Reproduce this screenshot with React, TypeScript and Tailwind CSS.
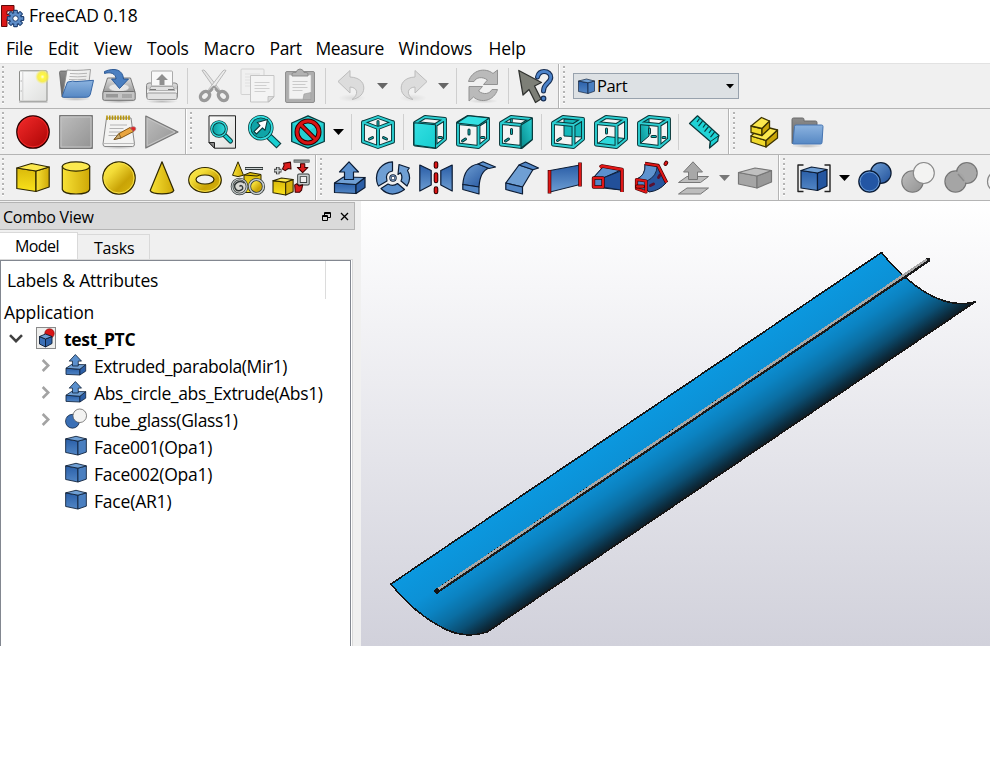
import React from "react";

const Icon = ({ children, size = 34 }: { children: React.ReactNode; size?: number }) => (
  <svg width={size} height={size} viewBox="0 0 34 34" fill="none" strokeLinejoin="round" className="shrink-0 overflow-visible">
    {children}
  </svg>
);

const Cell = ({ children }: { children: React.ReactNode }) => (
  <div className="flex w-[43px] shrink-0 items-center justify-center">{children}</div>
);

const Sep = ({ w = "w-[9px]" }: { w?: string }) => (
  <div className={`${w} flex shrink-0 items-center justify-center`}>
    <div className="h-[36px] w-px bg-[#cfcfcf]" />
  </div>
);

const Arrow = ({ color = "#000", w = "w-[18px]" }: { color?: string; w?: string }) => (
  <div className={`${w} flex shrink-0 items-center justify-center`}>
    <svg width="11" height="6" viewBox="0 0 11 6"><path d="M0 0h11L5.5 6z" fill={color} /></svg>
  </div>
);

const Grip = ({ w = "w-[11px]" }: { w?: string }) => (
  <div className={`${w} flex shrink-0 items-center pl-[1px]`}>
    <svg width="5" height="40" viewBox="0 0 5 40">
      {[0, 1, 2, 3, 4, 5, 6, 7].map((i) => (
        <g key={i}>
          <rect x="1" y={i * 5 + 1} width="2" height="2" fill="#fff" />
          <rect x="1" y={i * 5} width="2" height="2" fill="#b4b4b4" />
        </g>
      ))}
    </svg>
  </div>
);

const Break = () => <div className="mr-px w-[2px] shrink-0 self-stretch border-l border-[#b4b4b4] bg-white" />;

/* ---------- shared gradients ---------- */
const Defs = () => (
  <svg width="0" height="0" className="absolute">
    <defs>
      <linearGradient id="yel" x1="0" y1="0" x2="1" y2="1"><stop offset="0" stopColor="#fce94f" /><stop offset=".3" stopColor="#f3dc38" /><stop offset=".65" stopColor="#c9a306" /><stop offset="1" stopColor="#dcb90f" /></linearGradient>
      <linearGradient id="yelv" x1="0" y1="0" x2="0" y2="1"><stop offset="0" stopColor="#d9b90c" /><stop offset="1" stopColor="#fae21a" /></linearGradient>
      <linearGradient id="yelh" x1="0" y1="0" x2="1" y2="0"><stop offset="0" stopColor="#f7e136" /><stop offset="1" stopColor="#cfa906" /></linearGradient>
      <linearGradient id="blu" x1="0" y1="0" x2="1" y2="1"><stop offset="0" stopColor="#6f9fd4" /><stop offset="1" stopColor="#20509a" /></linearGradient>
      <linearGradient id="bluv" x1="0" y1="0" x2="0" y2="1"><stop offset="0" stopColor="#2a5fa8" /><stop offset="1" stopColor="#5286c5" /></linearGradient>
      <linearGradient id="mir" x1="0" y1="0" x2="0" y2="1"><stop offset="0" stopColor="#2a5da6" /><stop offset="1" stopColor="#6c9dd3" /></linearGradient>
      <linearGradient id="red" x1="0" y1="0" x2="1" y2="1"><stop offset="0" stopColor="#f52b2b" /><stop offset="1" stopColor="#a90303" /></linearGradient>
      <linearGradient id="gry" x1="0" y1="0" x2="1" y2="1"><stop offset="0" stopColor="#bdbdbd" /><stop offset="1" stopColor="#939393" /></linearGradient>
      <linearGradient id="grv" x1="0" y1="0" x2="0" y2="1"><stop offset="0" stopColor="#dedede" /><stop offset="1" stopColor="#9a9a9a" /></linearGradient>
      <linearGradient id="pap" x1="0" y1="0" x2="1" y2="1"><stop offset="0" stopColor="#fbfbfb" /><stop offset="1" stopColor="#dfe0de" /></linearGradient>
      <linearGradient id="fold" x1="0" y1="0" x2="0" y2="1"><stop offset="0" stopColor="#8cb3df" /><stop offset="1" stopColor="#5688c4" /></linearGradient>
      <linearGradient id="fgry" x1="0" y1="0" x2="0" y2="1"><stop offset="0" stopColor="#8c8c8c" /><stop offset="1" stopColor="#5e5e5e" /></linearGradient>
      <linearGradient id="cyd" x1="0" y1="0" x2="1" y2="0"><stop offset="0" stopColor="#06989a" /><stop offset="1" stopColor="#34e0e2" /></linearGradient>
      <linearGradient id="cyr" x1="0" y1="1" x2="1" y2="0"><stop offset="0" stopColor="#06898b" /><stop offset="1" stopColor="#2bd3d6" /></linearGradient>
      <linearGradient id="cyl" x1="0" y1="0" x2="1" y2="1"><stop offset="0" stopColor="#34e0e2" /><stop offset="1" stopColor="#16cdd0" /></linearGradient>
      <radialGradient id="sun"><stop offset="0" stopColor="#fffde0" /><stop offset="0.3" stopColor="#fff740" /><stop offset="0.65" stopColor="#f7ec3b" stopOpacity=".85" /><stop offset="1" stopColor="#f6f07a" stopOpacity="0" /></radialGradient>
      <radialGradient id="shd"><stop offset="0" stopColor="#000" stopOpacity=".22" /><stop offset="1" stopColor="#000" stopOpacity="0" /></radialGradient>
    </defs>
  </svg>
);

/* ---------- row 1 icons ---------- */
const NewDoc = () => (
  <Icon>
    <rect x="3.5" y="1.8" width="27.5" height="30.5" rx="1" fill="url(#pap)" stroke="#8b8c89" strokeWidth="1" />
    <path d="M6.8 2.5v29" stroke="#d0d0d0" /><circle cx="5.2" cy="12" r=".8" fill="#bbb" /><circle cx="5.2" cy="22" r=".8" fill="#bbb" />
    <path d="M3 33h28.5" stroke="#b0b0b0" strokeWidth="1.2" />
    <circle cx="26.5" cy="7.8" r="7.5" fill="url(#sun)" />
  </Icon>
);
const OpenDoc = () => (
  <Icon>
    <ellipse cx="17" cy="30" rx="15" ry="2" fill="url(#shd)" />
    <path d="M.5 3.500q0-1.500 1.500-1.500H9l1.500 2V28H3z" fill="url(#fgry)" stroke="#606060" strokeWidth=".8" />
    <path d="M4 25L8 1q8 1 23.500-.5l-1.500 13z" fill="url(#pap)" stroke="#8a8a8a" strokeWidth=".8" />
    <path d="M11 4.500q8 .8 17-.2M10.500 7.500q8 .8 17-.2M10 10.500q8 .6 17-.2" stroke="#b5b5b5" />
    <path d="M8.500 13q6-1.500 8.500-.4L34.500 11.300 31.300 25.500q-.8 2.800-3.800 2.800H4.500q-2 0-.8-2.500z" fill="url(#fold)" stroke="#3767a6" strokeWidth="1" />
  </Icon>
);
const SaveDoc = () => (
  <Icon>
    <ellipse cx="17" cy="32.500" rx="17" ry="2" fill="url(#shd)" />
    <path d="M5.500 9h23L33 23H1z" fill="url(#grv)" stroke="#777" />
    <ellipse cx="17" cy="18.500" rx="10" ry="4" fill="#e6e6e6" stroke="#c4c4c4" strokeWidth=".7" />
    <rect x=".8" y="22.500" width="32.400" height="8.800" rx="1.500" fill="#c4c4c4" stroke="#6e6e6e" />
    <path d="M4 25h12v3.500H4z" fill="#989898" /><path d="M21 25v4m2-4v4m2-4v4m2-4v4m2-4v4" stroke="#8b8b8b" />
    <path d="M2.500 2.500C13-2 21 1 21.500 10H26.500L17.500 19.500 9.500 10H14C14 5 9 2.500 2.500 4.500z" fill="#4b7fc0" stroke="#23508f" strokeWidth=".9" />
  </Icon>
);
const Print = () => (
  <Icon>
    <ellipse cx="17" cy="32.500" rx="16" ry="2" fill="url(#shd)" />
    <rect x="1.500" y="14" width="31" height="15.500" rx="2.500" fill="url(#grv)" stroke="#858585" />
    <path d="M2 20.500q15-3 30 0v5H2z" fill="#eee" />
    <rect x="6.500" y="2" width="21" height="15" rx="1" fill="#f8f8f8" stroke="#aaa" />
    <path d="M17 5l6 6h-3.500v5h-5v-5H11z" fill="#8f8f8f" />
    <path d="M6 17.500h22l2 4H4z" fill="#e0e0e0" stroke="#999" strokeWidth=".7" />
    <rect x="2" y="24" width="30" height="6.500" rx="1.500" fill="#e2e2e2" stroke="#999" /><path d="M5 20.500h6M23 20.500h6" stroke="#777" />
  </Icon>
);
const Cut = () => (
  <Icon>
    <path d="M5 1.500L20 23l2.500-2.500L8 1.800Q6.200.3 5 1.500z" fill="#e5e5e5" stroke="#aaa" strokeWidth=".8" />
    <path d="M29 1.500L14 23l-2.500-2.500L26 1.800q1.800-1.500 3-.3z" fill="#ededed" stroke="#aaa" strokeWidth=".8" />
    <ellipse cx="8" cy="27" rx="4" ry="5" transform="rotate(48 8 27)" stroke="#999" strokeWidth="3.400" />
    <ellipse cx="26" cy="27" rx="4" ry="5" transform="rotate(-48 26 27)" stroke="#999" strokeWidth="3.400" />
    <path d="M11.500 23.500L17 18l5.500 5.500" stroke="#999" strokeWidth="3" /><circle cx="17" cy="20" r="1" fill="#ddd" />
  </Icon>
);
const Copy = () => (
  <Icon>
    <rect x="1" y="0" width="23" height="25.500" rx="1" fill="#f0f0f0" stroke="#d2d2d2" />
    <path d="M5 5h15M5 8h15M5 11h15M5 14h15M5 17h15" stroke="#e0e0e0" />
    <path d="M10.500 6.500h23.500V28l-5 5h-18.500z" fill="#f4f4f4" stroke="#c5c5c5" />
    <path d="M14.500 13.500h15M14.500 16.500h12M14.500 19.500h15M14.500 22.500h11" stroke="#d0d0d0" strokeWidth="1.200" />
    <path d="M34 27.500h-6v5.500z" fill="#ddd" stroke="#bbb" strokeWidth=".8" />
  </Icon>
);
const Paste = () => (
  <Icon>
    <rect x="2.500" y="2.500" width="29" height="31" rx="1.500" fill="#adadad" stroke="#8f8f8f" />
    <path d="M6 6h22v24H6z" fill="#f2f2f2" stroke="#c0c0c0" strokeWidth=".6" />
    <path d="M9.500 12.500h15M9.500 15.500h13M9.500 18.500h15M9.500 21.500h10" stroke="#cacaca" strokeWidth="1.100" />
    <path d="M28 23.500l-7 1.500-1 5.500h8z" fill="#b5b5b5" stroke="#999" strokeWidth=".6" />
    <path d="M9 7v-2q0-1.500 2-1.500h2q1-3.500 4-3.500t4 3.500h2q2 0 2 1.500v2z" fill="#b2b2b2" stroke="#888" strokeWidth=".9" />
  </Icon>
);
const Undo = ({ flip = false }: { flip?: boolean }) => (
  <Icon>
    <g transform={flip ? "translate(35 0) scale(-1 1)" : "translate(-1 0)"}>
      <ellipse cx="18" cy="29" rx="14" ry="4" fill="url(#shd)" opacity=".35" />
      <path d="M4 12.500L16 1.500V8C27 8.500 31 15 29.500 21.500 28.500 26 24 29.500 18 30.500 24.500 26 24.500 18.500 16 18V24z" fill="#dcdcdc" stroke="#bcbcbc" />
    </g>
  </Icon>
);
const Refresh = () => (
  <Icon>
    <ellipse cx="17" cy="32" rx="15" ry="2.500" fill="url(#shd)" opacity=".6" />
    <path d="M2.500 12.500C6 1 19-2 27 4.500L31.500 1V15.500H17.500L21.500 11C16 7 10 8.500 8 12.500z" fill="#bababa" stroke="#929292" />
    <path d="M31.500 20.500C28 32 15 34.500 7.500 28L3 32V17.500h13.500L12.500 22C18 26.500 24 24.500 26 20.500z" fill="#bababa" stroke="#929292" />
  </Icon>
);
const Whats = () => (
  <Icon>
    <path d="M.8 1.500L23.500 13.500 16.500 17 23 30 17.500 33.500 11 20.500 5 26z" fill="#7d7f77" stroke="#30322f" strokeWidth="1.300" />
    <path d="M19.500 8C20.500 4 23 2.500 26 2.500 30 2.500 32.800 5 32.800 8.500 32.800 14 25.500 14 25.500 22" stroke="#162d52" strokeWidth="5" strokeLinecap="round" />
    <path d="M19.500 8C20.500 4 23 2.500 26 2.500 30 2.500 32.800 5 32.800 8.500 32.800 14 25.500 14 25.500 22" stroke="#4c83ca" strokeWidth="2.800" strokeLinecap="round" />
    <circle cx="25.500" cy="29.500" r="2.300" fill="#4c83ca" stroke="#162d52" strokeWidth="1.200" />
  </Icon>
);

/* ---------- row 2 icons ---------- */
const Rec = () => (
  <Icon><circle cx="17" cy="17" r="16.200" fill="url(#red)" stroke="#280000" strokeWidth="1.300" /><circle cx="17" cy="17" r="14.900" stroke="#ef2929" strokeWidth="1" /></Icon>
);
const Stop = () => (
  <Icon><rect x=".7" y=".7" width="32.600" height="32.600" fill="url(#gry)" stroke="#777" strokeWidth="1.200" /><rect x="2" y="2" width="30" height="30" stroke="#c4c4c4" /></Icon>
);
const Edit = () => (
  <Icon>
    <ellipse cx="17" cy="32" rx="17" ry="2.500" fill="url(#shd)" />
    <path d="M4.500 3h24.500l3.500 26q0 2.500-2 2.500H3Q1 31.500 1 29z" fill="#f3f3f2" stroke="#888" />
    <path d="M1.500 28.500h31" stroke="#bbb" />
    <path d="M8 10h17M7.500 13.500h14M7 17h16M6.500 20.500h9" stroke="#b3b3b3" strokeWidth="1.100" />
    <path d="M5 .5v4.500m2.750-4.500v4.500m2.750-4.500v4.500m2.750-4.500v4.500m2.750-4.500v4.500m2.750-4.500v4.500m2.750-4.500v4.500m2.750-4.500v4.500m2.750-4.500v4.500" stroke="#b8960c" strokeWidth="1.600" />
    <path d="M12 24.500L17 18.500 28 12.500 31.500 16.500 19 23z" fill="#e9a53f" stroke="#7b4b09" strokeWidth=".9" />
    <path d="M12 24.500L17 18.500 19 23z" fill="#c9a86a" stroke="#5b3a0b" strokeWidth=".6" />
    <path d="M28 12.500l3-.8q3.500 0 2.500 3.300l-2 1.500z" fill="#df2626" stroke="#9e8080" strokeWidth=".7" />
  </Icon>
);
const Play = () => (
  <Icon><path d="M.8 1L33 17 .8 33z" fill="url(#gry)" stroke="#777" strokeWidth="1.200" /><path d="M2.200 3.300L30 17 2.200 30.700z" stroke="#c4c4c4" /></Icon>
);
const FitAll = () => (
  <Icon>
    <path d="M4 .8h26.500v32.400H9.500L4 27.500z" fill="url(#pap)" stroke="#222" />
    <path d="M4 27.500h5.500v5.700z" fill="#888" stroke="#222" />
    <path d="M19 19.500L25.500 26" stroke="#0b3b3d" strokeWidth="5" strokeLinecap="round" /><path d="M19.500 20L25.500 26" stroke="#19cfd2" strokeWidth="3" strokeLinecap="round" />
    <circle cx="14" cy="14" r="7.300" fill="url(#cyd)" stroke="#0b3b3d" strokeWidth="3" /><circle cx="14" cy="14" r="7.400" stroke="#34e0e2" strokeWidth="1.300" />
  </Icon>
);
const FitSel = () => (
  <Icon>
    <path d="M20 20.500L31 31" stroke="#0b3b3d" strokeWidth="7.200" /><path d="M20 20.500L30.200 30.200" stroke="#19cfd2" strokeWidth="5" />
    <circle cx="12.800" cy="12.800" r="11.200" fill="#0fa4a7" stroke="#0b3b3d" strokeWidth="3.200" /><circle cx="12.800" cy="12.800" r="11.200" stroke="#34e0e2" strokeWidth="1.700" />
    <path d="M6 16.500L12 10.500 9.300 7.500 19.500 4.500 17 15.300 14.500 12.800 8.500 19z" fill="#fff" stroke="#0b3b3d" strokeWidth="1.100" />
  </Icon>
);
const NoDraw = () => (
  <Icon>
    <path d="M17 .8L33.300 8v18.500L17 33.200.7 26.500V8z" fill="#23cdd0" stroke="#08383a" strokeWidth="1.300" />
    <path d="M17 2.500L31.500 9 17 15.500 2.500 9z" fill="#34e0e2" opacity=".8" />
    <circle cx="17" cy="17" r="11" stroke="#2b0000" strokeWidth="5" /><path d="M9.500 9.500l15 15" stroke="#2b0000" strokeWidth="4.600" />
    <circle cx="17" cy="17" r="11" stroke="#d81414" strokeWidth="3" /><path d="M9.500 9.500l15 15" stroke="#d81414" strokeWidth="2.800" />
  </Icon>
);
const Tube = ({ d }: { d: string }) => (
  <>
    <path d={d} stroke="#08383a" strokeWidth="3.900" strokeLinecap="round" />
    <path d={d} stroke="#2ccfd2" strokeWidth="1.900" strokeLinecap="round" />
  </>
);
const Dash = ({ d }: { d: string }) => (
  <><path d={d} stroke="#08383a" strokeWidth="3" strokeLinecap="round" /><path d={d} stroke="#17b5b8" strokeWidth="1" strokeLinecap="round" /></>
);
const Iso = () => (
  <Icon>
    <path d="M17 2L32 7.500V26.500L17 32 2 26.500V7.500z" fill="#f3f3f3" />
    <Dash d="M17 6.500v4M8.500 24l3-1.400M25.500 24l-3-1.400" />
    <Tube d="M17 2L32 7.300V26.700L17 32 2 26.700V7.300zM2 7.300L17 13 32 7.300M17 13v19" />
  </Icon>
);
const Cube = ({ face }: { face: "front" | "top" | "right" | "rear" | "bottom" | "left" }) => (
  <Icon>
    <path d="M2 8L12 2 32 4v20L22.500 32 2 29.500z" fill="#f4f4f4" />
    {face === "rear" && <path d="M13 4L31 5v17l-18-1z" fill="#16b8bb" stroke="#08383a" />}
    {face === "left" && <path d="M2 8l10-6v19L2 29.500z" fill="url(#cyr)" stroke="#08383a" />}
    {face === "bottom" && <path d="M3 29l10-7.500 18 2L22 31z" fill="#2bd8db" stroke="#08383a" />}
    {face === "top" && <Dash d="M13 15v4M25.500 22.500h2.500M6.500 26l3-2" />}
    {face === "right" && <Dash d="M12.500 14.500v4M6.500 26l3-2M12.300 4v2.500" />}
    {(face === "bottom" || face === "left") && <Dash d="M12.500 14v4" />}
    {face === "left" && <Dash d="M15 21.500h3.500M26 22.500h2" />}
    {face === "rear" && <Dash d="M6.500 25.500l3-2" />}
    {face === "front" && <Dash d="M26 22.500h2.500" />}
    <Tube d="M2 8L12 2 32 4v20L22.500 32 2 29.500zM2 8L22.500 10 32 4M22.500 10v22" />
    {face === "front" && <path d="M1 7.700L22.500 9.700V33L1 30z" fill="url(#cyl)" stroke="#08383a" strokeWidth="1.100" />}
    {face === "top" && <path d="M.8 8L12 .8 33.300 3 22.500 10.500z" fill="#34e0e2" stroke="#08383a" strokeWidth="1.100" />}
    {face === "right" && <path d="M22 10L33.300 3v21.500L22 33.300z" fill="url(#cyr)" stroke="#08383a" strokeWidth="1.100" />}
  </Icon>
);
const Ruler = () => (
  <Icon>
    <path d="M2.500 8.500L10.500.8 32 20.500q-1 2-1.200 5.500L22.500 33l.8-6.500z" fill="#1fd3d6" stroke="#08383a" strokeWidth="1.200" />
    <path d="M22.500 33l1-6.500L32 20.500" stroke="#08383a" />
    <path d="M12.500 3.500L10 7M15.500 6.200l-4 5M18.500 9L16 12.500M21.500 11.700l-4 5M24.500 14.500L22 18M27.500 17.200l-4 5" stroke="#08383a" strokeWidth="1.200" />
  </Icon>
);
const PartWb = () => (
  <Icon>
    <g stroke="#3b3200" strokeWidth="1.300">
      <path d="M4 21L19 25.500v6.500L4 27z" fill="#f0d92c" /><path d="M19 25.500L30.500 15v8L19 32z" fill="#c9a608" />
      <path d="M4 21l11-10 15.500 4L19 25.500z" fill="#fbe84d" />
      <path d="M4 11l11 2.500V20.500L4 17.500z" fill="#f0d92c" /><path d="M15 13.500L22.500 6v7.500L15 20.500z" fill="#c9a608" />
      <path d="M4 11l10.500-8.500 8 3.500-7.500 7.500z" fill="#fbe84d" />
    </g>
  </Icon>
);
const Folder = () => (
  <Icon>
    <ellipse cx="17" cy="31" rx="16" ry="2" fill="url(#shd)" />
    <path d="M2 4.500q0-1.500 1.500-1.500h9q1.500 0 1.500 1.500v1.500h11.500q1.500 0 1.500 1.500v21H2z" fill="url(#fgry)" stroke="#6a6a6a" />
    <path d="M4.500 11.500q0-1.500 1.500-1.500h25.500Q33 10 33 11.500l-1 16q0 1.500-1.500 1.500H3.500Q2 29 3 27z" fill="url(#fold)" stroke="#4675b2" />
  </Icon>
);

/* ---------- row 3 icons ---------- */
const Y = "#2e2700";
const Box = () => (
  <Icon>
    <path d="M.8 7L20 10v20.500L.8 27.500z" fill="url(#yelv)" stroke={Y} strokeWidth="1.200" /><path d="M20 10L33.200 6v20L20 30.500z" fill="url(#yelh)" stroke={Y} strokeWidth="1.200" />
    <path d="M.8 7L15.500 2.500 33.200 6 20 10z" fill="#fce94f" stroke={Y} strokeWidth="1.200" />
  </Icon>
);
const Cyl = () => (
  <Icon><path d="M3.300 5.500v23C5 34.500 29 34.500 30.700 28.500v-23z" fill="url(#yelh)" stroke={Y} strokeWidth="1.200" /><ellipse cx="17" cy="5.500" rx="13.700" ry="4.600" fill="#fce94f" stroke={Y} strokeWidth="1.200" /></Icon>
);
const Sphere = () => (
  <Icon><circle cx="17" cy="17" r="16.200" fill="url(#yel)" stroke={Y} strokeWidth="1.200" /><circle cx="17" cy="17" r="15" stroke="#f6e04a" /></Icon>
);
const Cone = () => (
  <Icon><path d="M17 .8L28.800 29.500C27 34 7 34 5.200 29.500z" fill="url(#yelh)" stroke={Y} strokeWidth="1.200" /></Icon>
);
const Torus = () => (
  <Icon><ellipse cx="17" cy="19" rx="16.300" ry="12.500" fill="url(#yel)" stroke={Y} strokeWidth="1.200" /><ellipse cx="17" cy="19" rx="15" ry="11.300" stroke="#f6e04a" /><ellipse cx="17" cy="18.500" rx="9" ry="4.500" fill="#f0f0f0" stroke={Y} strokeWidth="1.200" /></Icon>
);
const Prims = () => (
  <Icon>
    <path d="M13 14l6-2.500 11 2v12l-4 6H13z" fill="url(#yelv)" stroke={Y} /><path d="M13 14l13 1 4-1.500" stroke={Y} />
    <path d="M7 .8l5.500 13.500q-5.500 2.500-11 0z" fill="url(#yelh)" stroke={Y} />
    <path d="M14 7.500h18" stroke="#333a3a" strokeWidth="3" /><path d="M14.500 7.500h17" stroke="#ccd2d2" />
    <circle cx="8.500" cy="25.500" r="7.500" fill="#d9d9d4" stroke="#333a3a" strokeWidth="2.600" /><circle cx="8.500" cy="25.500" r="7.500" stroke="#c8cece" strokeWidth="1.200" />
    <path d="M8.500 25.500q2-2 3 .5t-2.500 3.500-5-2.500 2-5.500 7.500.5" stroke="#333a3a" strokeWidth="1.500" />
    <circle cx="25.500" cy="25.500" r="7" fill="url(#yel)" stroke="#333a3a" strokeWidth="3.200" /><circle cx="25.500" cy="25.500" r="7" stroke="#c8cece" strokeWidth="1.600" />
  </Icon>
);
const Builder = () => (
  <Icon size={36}>
    <path d="M0 19.500L12 21v12L0 31z" fill="url(#yelv)" stroke={Y} /><path d="M12 21l7-2.500V30l-7 3z" fill="#d5b20c" stroke={Y} /><path d="M0 19.500l8-2.500 11 1.500L12 21z" fill="#fce94f" stroke={Y} />
    <path d="M4.500 6.500v7M1 10h7" stroke="#333" strokeWidth="3.400" /><path d="M4.500 7v6M1.500 10h6" stroke="#ccd2d2" strokeWidth="1.600" />
    <path d="M9 8.500l1.500-3.500-.5-2L16.500 2 17 8.500l-2.500-.5-3 2z" fill="#dc1c1c" stroke="#3c0000" />
    <path d="M19.500 1h15" stroke="#333a3a" strokeWidth="2.800" /><path d="M20 1h14" stroke="#ccd2d2" />
    <path d="M26 3.500h4v3.500h3l-5 5-5-5h3z" fill="#dc1c1c" stroke="#3c0000" />
    <path d="M24.500 14.500h8.500v8h-8.500z" fill="#eee" stroke="#333a3a" strokeWidth="3.300" /><path d="M24.500 14.500h8.500v8h-8.500z" stroke="#ccd2d2" strokeWidth="1.500" />
    <path d="M22.500 22.500l2 2 3.500-1-1 5-2 2-4 0-.5-7z" fill="#dc1c1c" stroke="#3c0000" />
  </Icon>
);
const N = "#0b1b33";
const Extrude = ({ size = 34, gray = false }: { size?: number; gray?: boolean }) => (
  <Icon size={size}>
    {gray ? (
      <g fill="#bdbdbd" stroke="#777" strokeWidth="1">
        <path d="M1.500 21.500l8.500-6h21.500l-8 6z" /><path d="M1.500 33l8.500-6h21.500l-8 6z" /><path d="M11.500 18.500v-7.500H6.500L16 .8 25.500 11h-5v7.500z" fill="#a8a8a8" />
      </g>
    ) : (
      <g stroke={N} strokeWidth="1.200">
        <path d="M1.500 22L23 23.500v9L1.500 31.500z" fill="url(#bluv)" /><path d="M23 23.500l9-7v10l-9 6z" fill="#2b5ea6" />
        <path d="M1.500 22l9-6 21.500.5-9 7z" fill="#6f9fd4" /><path d="M11.500 18.500v-7.500H6.500L16 .8 25.500 11h-5v7.500z" fill="#5b90cd" />
      </g>
    )}
  </Icon>
);
const Revolve = () => (
  <Icon>
    <g stroke={N} strokeWidth="1.200">
      <path d="M16.500.8C6 1.500-1 10 .8 20.500q.5 2.500 1.700 4.500L11 20Q8.500 11.500 16.500 10z" fill="#6f9fd4" />
      <path d="M5 27.500Q15 38 28.500 28.500L21.500 22.500Q17 26 12 23z" fill="#5b90cd" />
      <path d="M31 25Q36 17 31.500 9.500L33.300 7 23 3.500 22 13.500 24.500 11.800Q27 16 25 20z" fill="#6f9fd4" />
    </g>
    <circle cx="17" cy="17" r="2.600" fill="#fff" stroke={N} strokeWidth="2.200" /><circle cx="17" cy="17" r="2.600" stroke="#7f9fc8" strokeWidth=".9" />
  </Icon>
);
const Mirror = () => (
  <Icon>
    <g stroke={N} strokeWidth="1.200"><path d="M.8 4L12.200 9.500v14.500L.8 30z" fill="url(#mir)" /><path d="M33.200 4L21.800 9.500v14.500l11.400 6z" fill="url(#mir)" /></g>
    <path d="M17 2.500v3M17 13.500v6.500M17 27.500v3.500" stroke="#2b0000" strokeWidth="4.600" strokeLinecap="round" />
    <path d="M17 2.500v3M17 13.500v6.500M17 27.500v3.500" stroke="#dc1414" strokeWidth="2.600" strokeLinecap="round" />
  </Icon>
);
const Fillet = () => (
  <Icon>
    <g stroke={N} strokeWidth="1.200">
      <path d="M.8 23.500Q2 5.500 16 3L27 7Q18 10 17 26z" fill="url(#blu)" />
      <path d="M.8 23.500L17 26v7L.8 28.500z" fill="#5286c5" />
      <path d="M16 3l5-2.200L33.500 6 27 7.500z" fill="#5b90cd" />
    </g>
  </Icon>
);
const Chamfer = () => (
  <Icon>
    <g stroke={N} strokeWidth="1.200">
      <path d="M.8 22L14 4l14 4.500L17.500 26z" fill="#6f9fd4" /><path d="M.8 22L17.500 26v7L.8 28.500z" fill="#5286c5" /><path d="M14 4l6.500-3 13 6-5.500 1.800z" fill="#5286c5" />
    </g>
  </Icon>
);
const Ruled = () => (
  <Icon>
    <path d="M2 9.500L32 4V23.500L2 31z" fill="url(#mir)" stroke={N} />
    <path d="M1.500 9v23.500M32 1.500v24" stroke="#3c0000" strokeWidth="3.600" /><path d="M1.500 9.500v22.500M32 2v23" stroke="#e01616" strokeWidth="2.200" />
  </Icon>
);
const Loft = () => (
  <Icon>
    <path d="M3 16L12 6l18 3v20l-18-2z" fill="#3c70b6" stroke={N} /><path d="M3 16L12 6l18 3L12 17z" fill="#5b90cd" stroke={N} /><path d="M12 26V17L30 10v19z" fill="#22509a" stroke={N} strokeWidth=".8" />
    <path d="M9 6.500L11 5l20 3.500V31" stroke="#3c0000" strokeWidth="3.600" /><path d="M9 6.500L11 5l20 3.500V31" stroke="#e01616" strokeWidth="2.300" />
    <path d="M2.500 17h9.500v9H2.500z" fill="#5286c5" stroke="#3c0000" strokeWidth="3.400" /><path d="M2.500 17h9.500v9H2.500z" stroke="#e01616" strokeWidth="2.100" />
  </Icon>
);
const Sweep = () => (
  <Icon>
    <path d="M3 18Q12 14 11 3l13 2 8 17q-7 8-17 9z" fill="#27569f" stroke={N} />
    <path d="M3 18Q12 14 11 3l12 2Q23 15 13 20z" fill="#5f93cf" stroke={N} strokeWidth=".8" />
    <path d="M11 2.500L24 4.500l8.500 17" stroke="#3c0000" strokeWidth="3.600" /><path d="M11 2.500L24 4.500l8.500 17" stroke="#e01616" strokeWidth="2.200" />
    <path d="M2.500 18.500l9.500 1.500v11l-9.500-3.500z" fill="#5286c5" stroke="#3c0000" strokeWidth="3.200" /><path d="M2.500 18.500l9.500 1.500v11l-9.500-3.500z" stroke="#e01616" strokeWidth="2" />
    <path d="M16.500 24.500l3-1.500M24.500 16.500l1.500-2.500" stroke="#5a1030" strokeWidth="3" strokeLinecap="round" />
    <path d="M3 25.500h6M31.500 3l.8-1.300" stroke="#3c0000" strokeWidth="4" strokeLinecap="round" />
    <path d="M3 25.500h6M31.500 3l.8-1.300" stroke="#dc1414" strokeWidth="2.300" strokeLinecap="round" />
  </Icon>
);
const Thick = () => (
  <Icon>
    <g stroke="#777" strokeWidth="1.200"><path d="M.5 11.500L19 15v12L.5 23z" fill="#a5a5a5" /><path d="M19 15l14.500-5.500V21L19 27z" fill="#989898" /><path d="M.5 11.500L17 7l16.500 2.500L19 15z" fill="#c0c0c0" /></g>
  </Icon>
);
const BlueCube = ({ size = 34 }: { size?: number }) => (
  <Icon size={size}>
    <g stroke={N} strokeWidth="1.300"><path d="M1 6L20 9.500V31L1 27z" fill="url(#bluv)" /><path d="M20 9.500L33 6v20.500L20 31z" fill="#4a7fc0" /><path d="M1 6L17 2l16 4-13 3.500z" fill="#6f9fd4" /></g>
  </Icon>
);
const Compound = () => (
  <Icon>
    <path d="M6.500 4H1v26.500h5.500M27.500 4H33v26.500h-5.500" stroke="#222" strokeWidth="1.400" />
    <g stroke={N} strokeWidth="1.200"><path d="M4 9.500L20.500 12v17.500L4 27z" fill="url(#bluv)" /><path d="M20.500 12L30 8.500V25l-9.500 4.500z" fill="#2456a0" /><path d="M4 9.500L14.500 6 30 8.500 20.500 12z" fill="#6f9fd4" /></g>
  </Icon>
);
const Bool = () => (
  <Icon><circle cx="22.800" cy="12" r="10.300" fill="url(#blu)" stroke={N} strokeWidth="1.200" /><circle cx="11.500" cy="20.500" r="10.700" fill="#2356a4" stroke={N} strokeWidth="1.200" /><circle cx="11.500" cy="20.500" r="9.400" stroke="#6797cf" /></Icon>
);
const CutB = ({ size = 34, blue = false }: { size?: number; blue?: boolean }) => (
  <Icon size={size}><circle cx="11.500" cy="20.500" r="10.700" fill={blue ? "#3a6fb5" : "url(#gry)"} stroke={blue ? N : "#777"} strokeWidth="1.100" /><circle cx="22.800" cy="12" r="10.500" fill="#f3f3f2" stroke={blue ? "#555" : "#888"} strokeWidth="1.100" /></Icon>
);
const Union = () => (
  <Icon><circle cx="22.800" cy="12" r="10.300" fill="#a9a9a9" stroke="#777" strokeWidth="1.400" /><circle cx="11.500" cy="20.500" r="10.500" fill="#a3a3a3" stroke="#777" strokeWidth="1.400" /><circle cx="22.800" cy="12" r="9.700" fill="#a9a9a9" /><circle cx="11.500" cy="20.500" r="9.900" fill="#a5a5a5" /><path d="M14 13l6 7" stroke="#8a8a8a" strokeWidth="1.500" /></Icon>
);
const Inter = () => (
  <Icon><circle cx="11" cy="20.500" r="10.500" fill="#f3f3f3" stroke="#888" strokeWidth="1.200" /><circle cx="22.800" cy="12" r="10.300" fill="#f3f3f3" stroke="#888" /></Icon>
);

const TEETH = [0, 45, 90, 135, 180, 225, 270, 315];
const Logo = () => (
  <svg width="24" height="24" viewBox="0 0 24 24" className="shrink-0 overflow-visible">
    <path d="M1.500 1.500H14V7H7v3.500h5V15H7v7.500H1.500z" fill="#dc1818" stroke="#5e0808" />
    <g stroke="#1f3f70" strokeWidth="1.200" fill="#5e8ec9">
      {TEETH.map((a) => <rect key={a} x="13.700" y="6.300" width="3.600" height="4" rx=".6" transform={`rotate(${a} 15.500 14.500)`} />)}
      <circle cx="15.500" cy="14.500" r="6" />
    </g>
    {TEETH.map((a) => <rect key={a} x="14.300" y="7" width="2.400" height="4" fill="#5e8ec9" transform={`rotate(${a} 15.500 14.500)`} />)}
    <circle cx="15.500" cy="14.500" r="2.700" fill="#fff" stroke="#1f3f70" />
  </svg>
);

const DocIcon = () => (
  <svg width="20" height="22" viewBox="0 0 20 22" className="shrink-0">
    <rect x=".5" y=".5" width="19" height="21" fill="#eeeeec" stroke="#8a8a8a" />
    <circle cx="13.500" cy="6.500" r="4.800" fill="#d91616" stroke="#6d0707" strokeWidth=".5" />
    <g stroke={N} strokeWidth=".9" strokeLinejoin="round"><path d="M3.500 9.500L9.500 12v8l-6-3z" fill="#3c70b6" /><path d="M9.500 12L16 9.500v7L9.500 20z" fill="#2f62a9" /><path d="M3.500 9.500L9.500 7l6.500 2.500L9.500 12z" fill="#6f9fd4" /></g>
  </svg>
);

const menu: [string, string][] = [
  ["File", "w-[42px] tracking-[-0.2px]"], ["Edit", "w-[46px] tracking-[-0.1px]"], ["View", "w-[53px] tracking-[-0.1px]"], ["Tools", "w-[56.5px] tracking-[-0.4px]"],
  ["Macro", "w-[66px]"], ["Part", "w-[46px] tracking-[-0.4px]"], ["Measure", "w-[83px] tracking-[-0.4px]"], ["Windows", "w-[90px] tracking-[-0.1px]"], ["Help", "w-[50px] tracking-[-0.1px]"],
];

const tree: { label: string; cls: string; kind: "ext" | "cut" | "face" }[] = [
  { label: "Extruded_parabola(Mir1)", cls: "tracking-[-0.4px]", kind: "ext" },
  { label: "Abs_circle_abs_Extrude(Abs1)", cls: "tracking-[-0.35px]", kind: "ext" },
  { label: "tube_glass(Glass1)", cls: "tracking-[-0.32px]", kind: "cut" },
  { label: "Face001(Opa1)", cls: "tracking-[-0.25px]", kind: "face" },
  { label: "Face002(Opa1)", cls: "tracking-[-0.25px]", kind: "face" },
  { label: "Face(AR1)", cls: "tracking-[-0.2px]", kind: "face" },
];

const Scene = () => (
  <svg width="629" height="444" viewBox="0 0 629 444" className="block">
    <defs>
      <linearGradient id="trough" gradientUnits="userSpaceOnUse" x1="30" y1="382" x2="84" y2="461.700">
        <stop offset="0" stopColor="#0b98df" /><stop offset=".3" stopColor="#0c91d6" /><stop offset=".48" stopColor="#0b83c2" /><stop offset=".64" stopColor="#0b6fa4" />
        <stop offset=".8" stopColor="#0b4f74" /><stop offset=".92" stopColor="#0c2c3e" /><stop offset="1" stopColor="#0f171c" />
      </linearGradient>
    </defs>
    <path shapeRendering="crispEdges" d="M30 382L520.500 50.500C532 65 543 75 555 84C570 95 585 101 598 101.500Q607 102 614 100L126 430C112 435 96 433 84 427C64 417 45 401 30 382z" fill="url(#trough)" stroke="#151515" strokeWidth="1.600" strokeLinejoin="round" />
    <g shapeRendering="crispEdges">
      <path d="M76 389L567 58" stroke="#1a1a1a" strokeWidth="4.600" strokeLinecap="round" />
      <path d="M77.500 386.800L566 57.300" stroke="#a8a8a8" strokeWidth="2.400" />
      <circle cx="76" cy="389" r="2.600" fill="#141414" />
    </g>
  </svg>
);

const BAR = "flex w-full items-stretch overflow-hidden border-b border-[#b4b4b4] bg-[#f0f0f0]";

export default function App() {
  return (
    <div className="relative h-[780px] w-[990px] overflow-hidden bg-white font-['Open_Sans','Noto_Sans',sans-serif] text-[17.5px] text-black">
      <Defs />
      <header className="flex h-[31px] items-center">
        <div className="w-[29px] pt-px"><Logo /></div>
        <span className="leading-[31px] tracking-[-0.1px]">FreeCAD 0.18</span>
      </header>
      <nav className="flex h-[32px] items-center pt-[3px] pl-[6px]">
        {menu.map(([m, c]) => <span key={m} className={`shrink-0 whitespace-nowrap leading-[31px] ${c}`}>{m}</span>)}
      </nav>

      <div className={`${BAR} h-[46px] border-t border-t-[#e2e2e2]`}>
        <Grip />
        <Cell><NewDoc /></Cell><Cell><OpenDoc /></Cell><Cell><SaveDoc /></Cell><Cell><Print /></Cell>
        <Sep /><Cell><Cut /></Cell><Cell><Copy /></Cell><Cell><Paste /></Cell>
        <Sep /><Cell><Undo /></Cell><Arrow color="#666" /><Cell><Undo flip /></Cell><Arrow color="#666" />
        <Sep /><Cell><Refresh /></Cell><Sep /><Cell><Whats /></Cell>
        <div className="w-[2px] shrink-0" /><Break /><Grip w="w-[12px]" />
        <div className="mt-[9px] flex h-[26px] w-[166px] items-center border border-[#98a2ad] bg-[#dde1e4] pr-[4px] pl-[4px]">
          <BlueCube size={17} />
          <span className="ml-[2px] flex-1 text-[16.5px] leading-6 tracking-[-0.4px]">Part</span>
          <svg width="8" height="5" viewBox="0 0 8 5"><path d="M0 0h8L4 4.500z" fill="#000" /></svg>
        </div>
      </div>

      <div className={`${BAR} h-[46px]`}>
        <Grip />
        <Cell><Rec /></Cell><Cell><Stop /></Cell><Cell><Edit /></Cell><Cell><Play /></Cell>
        <div className="w-[2px] shrink-0" /><Break /><Grip w="w-[12px]" />
        <Cell><FitAll /></Cell><Cell><FitSel /></Cell><Cell><NoDraw /></Cell><Arrow />
        <Sep /><Cell><Iso /></Cell>
        <Sep /><Cell><Cube face="front" /></Cell><Cell><Cube face="top" /></Cell><Cell><Cube face="right" /></Cell>
        <Sep /><Cell><Cube face="rear" /></Cell><Cell><Cube face="bottom" /></Cell><Cell><Cube face="left" /></Cell>
        <Sep w="w-[7px]" /><Cell><Ruler /></Cell>
        <div className="w-[3px] shrink-0" /><Break /><Grip />
        <Cell><PartWb /></Cell><Cell><Folder /></Cell>
      </div>

      <div className={`${BAR} h-[46px]`}>
        <Grip />
        <Cell><Box /></Cell><Cell><Cyl /></Cell><Cell><Sphere /></Cell><Cell><Cone /></Cell><Cell><Torus /></Cell><Cell><Prims /></Cell><Cell><Builder /></Cell>
        <div className="w-[3px] shrink-0" /><Break /><Grip w="w-[10px]" />
        <Cell><Extrude /></Cell><Cell><Revolve /></Cell><Cell><Mirror /></Cell><Cell><Fillet /></Cell><Cell><Chamfer /></Cell><Cell><Ruled /></Cell><Cell><Loft /></Cell><Cell><Sweep /></Cell>
        <Cell><Extrude gray /></Cell><Arrow color="#777" /><Cell><Thick /></Cell>
        <div className="w-[2px] shrink-0" /><Break /><Grip />
        <Cell><Compound /></Cell><Arrow /><Cell><Bool /></Cell><Cell><CutB /></Cell><Cell><Union /></Cell><Cell><Inter /></Cell>
      </div>

      <main className="flex h-[445px] w-full bg-[#f0f0f0]">
        <aside className="flex w-[361px] shrink-0 flex-col pt-px">
          <div className="flex h-[28px] w-[355px] items-center border border-l-0 border-[#b4b4b4] bg-[#dadada] pl-[3px]">
            <span className="flex-1 pt-px text-[16px] leading-6 tracking-[-0.25px]">Combo View</span>
            <svg width="9" height="9" viewBox="0 0 9 9" fill="none" stroke="#000"><path d="M2.500 3V.5h6v5H6M2.500 1.500h6M.5 3.500h5v5h-5zM.5 4.500h5" /></svg>
            <svg width="9" height="9" viewBox="0 0 9 9" className="mr-[5px] ml-[9px]" stroke="#000" strokeWidth="1.300"><path d="M1 1l7 7M8 1L1 8" /></svg>
          </div>
          <div className="flex h-[29px] items-end text-[16px]">
            <div className="h-[27px] w-[78px] border-t border-r border-[#d9d9d9] bg-white pl-[15px] leading-[26px] tracking-[-0.6px]">Model</div>
            <div className="h-[25px] w-[72px] border-t border-r border-[#d9d9d9] pl-[16px] leading-[26px] tracking-[-0.2px]">Tasks</div>
          </div>
          <div className="w-[353px] flex-1 border-t border-r border-[#d9d9d9] bg-white pr-px">
            <div className="h-full border border-b-0 border-[#828790] bg-white">
              <div className="flex h-[38px] w-[325px] items-start border-r border-[#dcdcdc] pt-[3px] pl-[6px]"><span className="leading-8 tracking-[-0.2px]">Labels &amp; Attributes</span></div>
              <div className="flex h-[27px] items-center pl-[3px]"><span className="leading-[27px] tracking-[-0.1px]">Application</span></div>
              <div className="flex h-[27px] items-center pl-[8px]">
                <svg width="14" height="9" viewBox="0 0 14 9" fill="none" className="-mt-[3px]"><path d="M1 1.200l6 6 6-6" stroke="#404040" strokeWidth="2.600" /></svg>
                <div className="-mt-[3px] ml-[13px]"><DocIcon /></div>
                <span className="ml-[8px] font-bold leading-[27px] tracking-[-0.3px]">test_PTC</span>
              </div>
              {tree.map((t) => (
                <div key={t.label} className="flex h-[27px] items-center pl-[40px]">
                  <div className="-mt-[2px] w-[23px]">
                    {t.kind !== "face" && <svg width="10" height="13" viewBox="0 0 10 13" fill="none"><path d="M1.700 1l5.500 5.500-5.500 5.500" stroke="#a3a3a3" strokeWidth="2.600" /></svg>}
                  </div>
                  <div className="-mt-[3px] w-[30px] pl-px">
                    {t.kind === "ext" ? <Extrude size={22} /> : t.kind === "cut" ? <CutB size={22} blue /> : <BlueCube size={22} />}
                  </div>
                  <span className={`leading-[27px] ${t.cls}`}>{t.label}</span>
                </div>
              ))}
            </div>
          </div>
        </aside>
        <section className="flex-1 bg-linear-to-b from-white to-[#d1d1db] pt-px"><Scene /></section>
      </main>
    </div>
  );
}
